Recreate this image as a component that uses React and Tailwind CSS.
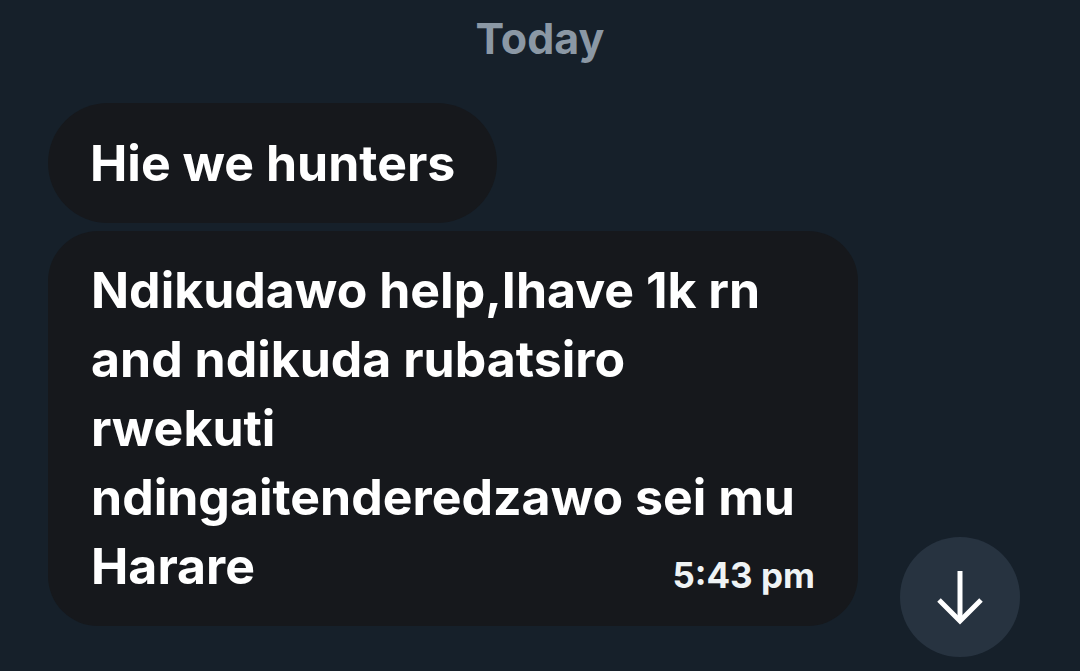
export default function App() {
  return (
    <div className="w-[1080px] h-[671px] bg-[#16202a] overflow-hidden relative" style={{ fontFamily: "Inter, 'Noto Sans', sans-serif" }}>
      <div className="flex justify-center pt-[12px]">
        <span className="text-[43px] leading-[52px] font-bold text-[#8b98a5]">Today</span>
      </div>
      <div className="flex flex-col items-start gap-[8px] pl-[48px] mt-[39px]">
        <div className="bg-[#16181c] rounded-full px-[42px] py-[25px] text-white text-[50px] leading-[70px] font-bold">
          Hie we hunters
        </div>
        <div className="w-[810px] bg-[#16181c] rounded-[50px] pl-[43px] pr-[43px] py-[25px] text-white text-[50px] leading-[69px] font-bold">
          <div>Ndikudawo help,Ihave 1k rn</div>
          <div>and ndikuda rubatsiro</div>
          <div>rwekuti</div>
          <div>ndingaitenderedzawo sei mu</div>
          <div className="flex items-end justify-between">
            <span>Harare</span>
            <span className="text-[35px] leading-[50px] text-[#eff3f4] ml-[40px] mb-[1px]">5:43 pm</span>
          </div>
        </div>
      </div>
      <button className="absolute left-[900px] top-[537px] w-[120px] h-[120px] rounded-full bg-[#273340] flex items-center justify-center">
        <svg width="52" height="56" viewBox="0 0 52 56" fill="none" stroke="white" strokeWidth="5">
          <path d="M26 2 V52" />
          <path d="M5 31 L26 52 L47 31" />
        </svg>
      </button>
    </div>
  );
}
